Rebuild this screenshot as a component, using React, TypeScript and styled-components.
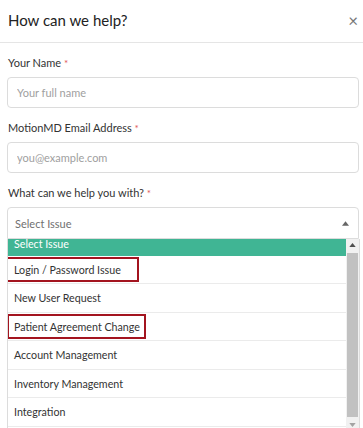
import React from 'react';
import styled, { createGlobalStyle } from 'styled-components';

const GlobalStyle = createGlobalStyle`
  html, body {
    margin: 0;
    padding: 0;
    background: #fff;
  }
  body {
    font-family: Lato, 'Open Sans', 'Liberation Sans', sans-serif;
    color: #333;
  }
`;

const issues = [
  { label: 'Login / Password Issue', marked: true, padRight: 16, shift: 9 },
  { label: 'New User Request' },
  { label: 'Patient Agreement Change', marked: true, padRight: 4, shift: 7 },
  { label: 'Account Management' },
  { label: 'Inventory Management' },
  { label: 'Integration' },
];

const App = () => {
  return (
    <>
      <GlobalStyle />
      <Modal>
        <Header>
          <Title>How can we help?</Title>
          <Close>×</Close>
        </Header>
        <Body>
          <Field>
            <Label>
              Your Name <Req>*</Req>
            </Label>
            <Input placeholder="Your full name" />
          </Field>
          <Field>
            <Label>
              MotionMD Email Address <Req>*</Req>
            </Label>
            <Input placeholder="you@example.com" />
          </Field>
          <Field>
            <Label>
              What can we help you with? <Req>*</Req>
            </Label>
            <SelectBox>
              <SelectText>Select Issue</SelectText>
              <Caret viewBox="0 0 8 5">
                <path d="M0 5 L4 0 L8 5 Z" fill="#666" />
              </Caret>
            </SelectBox>
            <Dropdown>
              <Options>
                <Option $active>Select Issue</Option>
                {issues.map((item) => (
                  <Option key={item.label}>
                    {item.marked ? (
                      <Marked $padRight={item.padRight ?? 0} $shift={item.shift ?? 0}>
                        {item.label}
                      </Marked>
                    ) : (
                      item.label
                    )}
                  </Option>
                ))}
              </Options>
              <Scrollbar>
                <ScrollArrow viewBox="0 0 8 5">
                  <path d="M0 5 L4 0 L8 5 Z" fill="#505050" />
                </ScrollArrow>
                <Thumb />
                <ScrollArrow viewBox="0 0 8 5">
                  <path d="M0 0 L4 5 L8 0 Z" fill="#a3a3a3" />
                </ScrollArrow>
              </Scrollbar>
            </Dropdown>
          </Field>
        </Body>
      </Modal>
    </>
  );
};

export default App;

const Modal = styled.div`
  width: 363px;
  height: 428px;
  overflow: hidden;
  background: #fff;
`;

const Header = styled.div`
  display: flex;
  align-items: center;
  justify-content: space-between;
  box-sizing: border-box;
  height: 43px;
  padding: 0 5px 2px 8px;
  border-bottom: 1px solid #e5e5e5;
`;

const Title = styled.h4`
  margin: 0;
  font-size: 15px;
  font-weight: 400;
  color: #222;
`;

const Close = styled.span`
  font-size: 17px;
  line-height: 1;
  color: #777;
`;

const Body = styled.div`
  display: flex;
  flex-direction: column;
  gap: 11px;
  padding: 11px 4px 0 7px;
`;

const Field = styled.div`
  display: flex;
  flex-direction: column;
`;

const Label = styled.label`
  font-size: 11px;
  line-height: 18px;
  margin: 0 0 5px 1px;
  color: #333;
`;

const Req = styled.span`
  color: #e05555;
  font-size: 10px;
`;

const Input = styled.input`
  box-sizing: border-box;
  width: 352px;
  height: 31px;
  padding: 0 9px;
  border: 1px solid #dcdcdc;
  border-radius: 4px;
  font-family: inherit;
  font-size: 11px;
  color: #333;
  outline: none;

  &::placeholder {
    color: #a0a0a0;
  }
`;

const SelectBox = styled.div`
  display: flex;
  align-items: center;
  justify-content: space-between;
  box-sizing: border-box;
  width: 352px;
  height: 32px;
  padding: 0 9px 0 7px;
  border: 1px solid #dcdcdc;
  border-radius: 4px 4px 0 0;
`;

const SelectText = styled.span`
  font-size: 11px;
  color: #707070;
`;

const Caret = styled.svg`
  width: 7px;
  height: 5px;
`;

const Dropdown = styled.div`
  display: flex;
  box-sizing: border-box;
  width: 353px;
  height: 190px;
  border-left: 1px solid #dcdcdc;
  border-right: 1px solid #dcdcdc;
  overflow: hidden;
`;

const Options = styled.div`
  flex: 1;
  margin-top: -12px;
`;

const Option = styled.div<{ $active?: boolean }>`
  display: flex;
  align-items: center;
  box-sizing: border-box;
  height: 28.5px;
  padding: ${({ $active }) => ($active ? '5px 0 0 6px' : '0 0 0 6px')};
  font-size: 10.7px;
  color: ${({ $active }) => ($active ? '#fff' : '#333')};
  background: ${({ $active }) => ($active ? '#40b594' : '#fff')};
  border-bottom: 1px solid ${({ $active }) => ($active ? '#40b594' : '#ebebeb')};
`;

const Marked = styled.span<{ $padRight: number; $shift: number }>`
  display: inline-block;
  margin-left: -${({ $shift }) => $shift}px;
  padding: 2px ${({ $padRight }) => $padRight}px 2px ${({ $shift }) => $shift - 2}px;
  border: 2px solid #a3141f;
  line-height: 17px;
`;

const Scrollbar = styled.div`
  display: flex;
  flex-direction: column;
  align-items: center;
  width: 13px;
  background: #f1f1f1;
  padding: 4px 0 2px;
  gap: 6px;
`;

const ScrollArrow = styled.svg`
  width: 7px;
  height: 4px;
  flex-shrink: 0;
`;

const Thumb = styled.div`
  flex: 1;
  width: 11px;
  background: #c1c1c1;
`;
